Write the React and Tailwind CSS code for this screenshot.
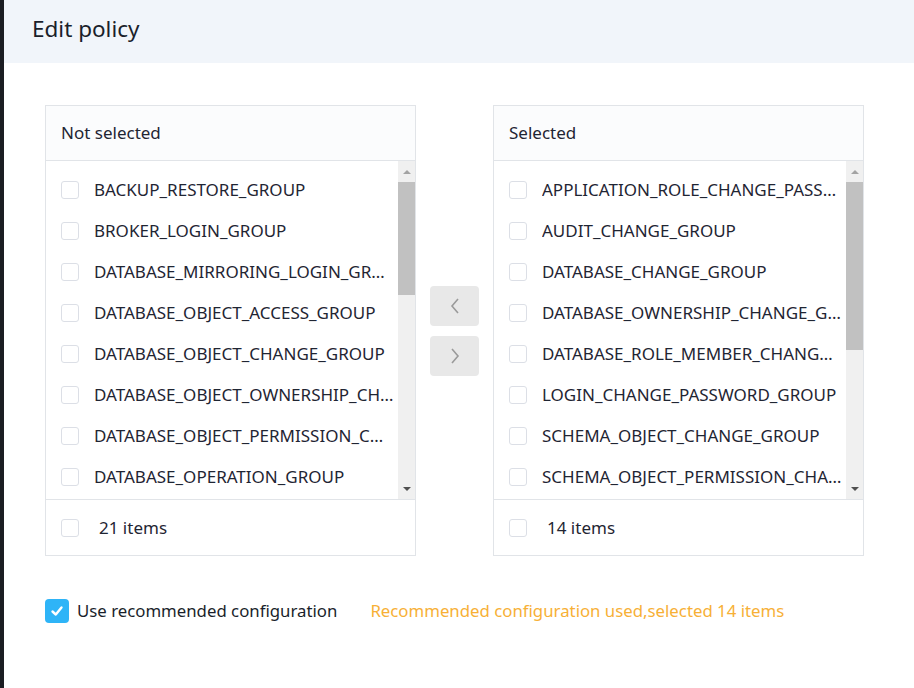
import React from 'react';

const leftItems = [
  'BACKUP_RESTORE_GROUP',
  'BROKER_LOGIN_GROUP',
  'DATABASE_MIRRORING_LOGIN_GROUP',
  'DATABASE_OBJECT_ACCESS_GROUP',
  'DATABASE_OBJECT_CHANGE_GROUP',
  'DATABASE_OBJECT_OWNERSHIP_CHANGE_GROUP',
  'DATABASE_OBJECT_PERMISSION_CHANGE_GROUP',
  'DATABASE_OPERATION_GROUP',
  'DATABASE_PERMISSION_CHANGE_GROUP',
];

const rightItems = [
  'APPLICATION_ROLE_CHANGE_PASSWORD_GROUP',
  'AUDIT_CHANGE_GROUP',
  'DATABASE_CHANGE_GROUP',
  'DATABASE_OWNERSHIP_CHANGE_GROUP',
  'DATABASE_ROLE_MEMBER_CHANGE_GROUP',
  'LOGIN_CHANGE_PASSWORD_GROUP',
  'SCHEMA_OBJECT_CHANGE_GROUP',
  'SCHEMA_OBJECT_PERMISSION_CHANGE_GROUP',
  'SERVER_ROLE_MEMBER_CHANGE_GROUP',
];

function Box() {
  return <span className="w-[18px] h-[18px] shrink-0 rounded-[3px] border border-[#dcdfe6] bg-white" />;
}

function Scrollbar({ thumb }) {
  return (
    <div className="w-[17px] shrink-0 bg-[#f0f0f0] flex flex-col items-center">
      <div className="h-[21px] w-full flex items-center justify-center">
        <span className="w-0 h-0 border-l-[4px] border-r-[4px] border-b-[4px] border-l-transparent border-r-transparent border-b-[#a3a3a3]" />
      </div>
      <div className="w-[17px] bg-[#c1c1c1]" style={{ height: thumb }} />
      <div className="flex-1" />
      <div className="h-[21px] w-full flex items-center justify-center">
        <span className="w-0 h-0 border-l-[4px] border-r-[4px] border-t-[4px] border-l-transparent border-r-transparent border-t-[#505050]" />
      </div>
    </div>
  );
}

function Panel({ title, items, count, thumb }) {
  return (
    <div className="w-[371px] border border-[#e1e4e8] flex flex-col bg-white">
      <div className="h-[55px] bg-[#fbfcfd] border-b border-[#e1e4e8] flex items-center px-[15px] text-[17px] text-[#1f2533]">
        {title}
      </div>
      <div className="h-[338px] flex overflow-hidden">
        <div className="flex-1 min-w-0 pt-[8px] overflow-hidden">
          {items.map((it) => (
            <div key={it} className="h-[41px] flex items-center pl-[15px] pr-[4px] gap-[15px]">
              <Box />
              <span className="truncate text-[17px] text-[#1f2533]">{it}</span>
            </div>
          ))}
        </div>
        <Scrollbar thumb={thumb} />
      </div>
      <div className="h-[56px] border-t border-[#e1e4e8] flex items-center pl-[15px] gap-[20px] text-[17px] text-[#1f2533]">
        <Box />
        <span>{count} items</span>
      </div>
    </div>
  );
}

export default function App() {
  return (
    <div className="w-[914px] h-[688px] flex bg-white" style={{ fontFamily: '"Noto Sans", "Open Sans", sans-serif' }}>
      <div className="w-[4px] bg-[#1b1d22]" />
      <div className="flex-1 flex flex-col">
        <div className="h-[63px] bg-[#f1f5fa] flex items-center px-[28px] pb-[6px] text-[22.5px] text-[#1a1f2b]">
          Edit policy
        </div>
        <div className="pt-[42px] pl-[41px] flex items-start">
          <Panel title="Not selected" items={leftItems} count={21} thumb={113} />
          <div className="w-[77px] self-stretch flex flex-col items-center justify-center gap-[10px]">
            <button className="w-[49px] h-[40px] rounded-[4px] bg-[#e8e8e8] flex items-center justify-center">
              <svg width="12" height="18" viewBox="0 0 12 18" fill="none" stroke="#9a9a9a" strokeWidth="1.6">
                <path d="M9 2 L3 9 L9 16" />
              </svg>
            </button>
            <button className="w-[49px] h-[40px] rounded-[4px] bg-[#e8e8e8] flex items-center justify-center">
              <svg width="12" height="18" viewBox="0 0 12 18" fill="none" stroke="#9a9a9a" strokeWidth="1.6">
                <path d="M3 2 L9 9 L3 16" />
              </svg>
            </button>
          </div>
          <Panel title="Selected" items={rightItems} count={14} thumb={168} />
        </div>
        <div className="pl-[41px] mt-[42px] flex items-center">
          <span className="w-[24px] h-[24px] rounded-[4px] bg-[#2eb4f7] flex items-center justify-center">
            <svg width="14" height="14" viewBox="0 0 14 14" fill="none" stroke="white" strokeWidth="2.4" strokeLinecap="round" strokeLinejoin="round">
              <path d="M2.5 7.5 L5.8 10.5 L11.5 3.5" />
            </svg>
          </span>
          <span className="ml-[8px] text-[16.8px] text-[#1a1f2b]">Use recommended configuration</span>
          <span className="ml-[33px] text-[16.8px] text-[#f7b036]">Recommended configuration used,selected 14 items</span>
        </div>
      </div>
    </div>
  );
}
